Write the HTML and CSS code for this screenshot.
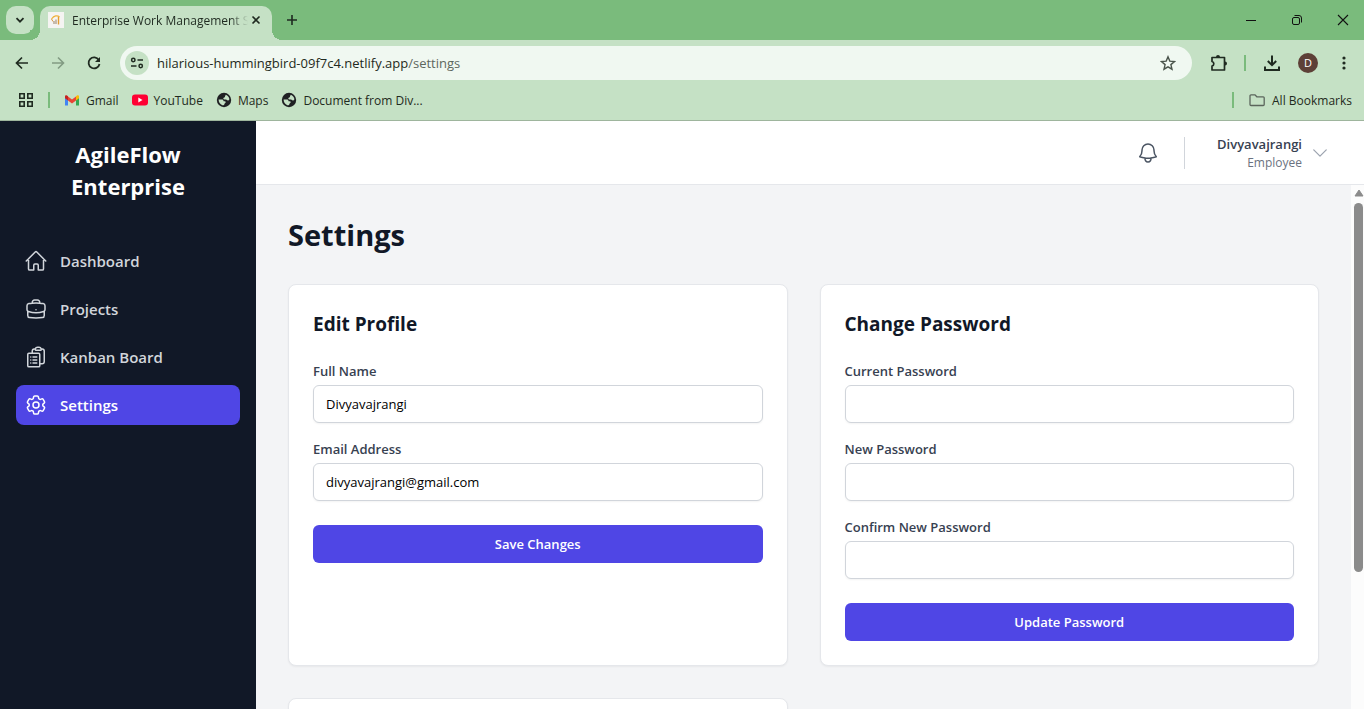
FILE: index.html
```html
<!DOCTYPE html>
<html lang="en">
<head>
<meta charset="utf-8">
<title>Enterprise Work Management System</title>
<link rel="stylesheet" href="styles.css">
</head>
<body>
<div class="window">
  <div class="tabstrip">
    <button class="tab-search" aria-label="Search tabs"><svg width="12" height="12" viewBox="0 0 12 12"><path d="M2.500 4.200 6 7.700l3.500-3.500" fill="none" stroke="#1f2a20" stroke-width="1.800"/></svg></button>
    <div class="tab">
      <svg class="favicon" width="16" height="16" viewBox="0 0 16 16"><path d="M0 0h16v16H0z" fill="#f5f4f2"/><path d="M3.500 7C6 3.500 9.500 3 11.500 5" fill="none" stroke="#eeb13c" stroke-width="1.200"/><path d="M6 9v3M8 7.500V12" stroke="#a08b75" stroke-width="1.100"/><path d="M10.500 5v7.500" stroke="#e59b2d" stroke-width="1.400"/><path d="M3.500 7 5 9.500" stroke="#d9953c"/></svg>
      <span class="tab-title">Enterprise Work Management S</span>
      <button class="plain" aria-label="Close tab"><svg width="16" height="16" viewBox="0 0 16 16"><path d="m4.500 4.500 7 7m0-7-7 7" stroke="#1f2a20" stroke-width="1.600"/></svg></button>
    </div>
    <button class="plain new-tab" aria-label="New tab"><svg width="16" height="16" viewBox="0 0 16 16"><path d="M8 3v10M3 8h10" stroke="#1f2a20" stroke-width="1.600"/></svg></button>
    <div class="window-controls">
      <button class="plain" aria-label="Minimize"><svg width="12" height="12" viewBox="0 0 12 12"><path d="M1 6.500h10" stroke="#111"/></svg></button>
      <button class="plain" aria-label="Restore"><svg width="12" height="12" viewBox="0 0 12 12" fill="none" stroke="#111"><rect x="1.500" y="3.500" width="7" height="7" rx="1.500"/><path d="M3.500 1.500H8A2.500 2.500 0 0 1 10.500 4v4.500"/></svg></button>
      <button class="plain" aria-label="Close"><svg width="12" height="12" viewBox="0 0 12 12"><path d="m1 1 10 10M11 1 1 11" stroke="#111" stroke-width="1.100"/></svg></button>
    </div>
  </div>

  <div class="browser-bar">
    <div class="toolbar">
      <button class="plain" aria-label="Back"><svg width="16" height="16" viewBox="0 0 16 16"><path d="M14 8H3M8 2.500 2.500 8 8 13.500" fill="none" stroke="#1f2a20" stroke-width="1.700"/></svg></button>
      <button class="plain" aria-label="Forward"><svg width="16" height="16" viewBox="0 0 16 16"><path d="M2 8h11M8 2.500 13.500 8 8 13.500" fill="none" stroke="#829b83" stroke-width="1.600"/></svg></button>
      <button class="plain" aria-label="Reload"><svg width="16" height="16" viewBox="0 0 16 16"><path d="M12.800 5A5.500 5.500 0 1 0 13.500 9" fill="none" stroke="#1f2a20" stroke-width="1.800"/><path d="M14 2v5H9z" fill="#1f2a20"/></svg></button>
      <div class="address">
        <button class="site-info" aria-label="Site information"><svg width="14" height="14" viewBox="0 0 14 14" fill="none" stroke="#1f2a20" stroke-width="1.500"><circle cx="3.300" cy="4" r="1.700"/><path d="M7.500 4H13M1 10h5.500"/><circle cx="10.700" cy="10" r="1.700"/></svg></button>
        <span class="url">hilarious-hummingbird-09f7c4.netlify.app<span class="path">/settings</span></span>
        <button class="plain" aria-label="Bookmark"><svg width="16" height="16" viewBox="0 0 16 16"><path d="m8 1.800 1.800 4.300 4.700.400-3.600 3.100 1.100 4.600L8 11.800l-4 2.400 1.100-4.600L1.500 6.500l4.700-.400z" fill="none" stroke="#4a544b" stroke-width="1.400"/></svg></button>
      </div>
      <button class="plain extensions" aria-label="Extensions"><svg width="18" height="18" viewBox="0 0 18 18"><path d="M2 3.500h12.500V8.200v3.300V16H2v-4a2.300 2.300 0 0 0 0-4.500z" fill="none" stroke="#1f2a20" stroke-width="1.700" stroke-linejoin="round"/><path d="M6 3a2 2 0 0 1 4 0zM15 7.500a2 2 0 0 1 0 4z" fill="#1f2a20"/></svg></button>
      <span class="rule"></span>
      <button class="plain download" aria-label="Downloads"><svg width="18" height="18" viewBox="0 0 18 18" fill="none" stroke="#1f2a20" stroke-width="2"><path d="M9 1.500v9M4.800 7 9 11.200 13.200 7M2 12.500V16h14v-3.500"/></svg></button>
      <button class="avatar" aria-label="Profile">D</button>
      <button class="plain" aria-label="Menu"><svg width="16" height="16" viewBox="0 0 16 16" fill="#1f2a20"><circle cx="8" cy="3" r="1.600"/><circle cx="8" cy="8" r="1.600"/><circle cx="8" cy="13" r="1.600"/></svg></button>
    </div>
    <div class="bookmarks">
      <button class="plain" aria-label="Apps"><svg width="16" height="16" viewBox="0 0 16 16" fill="none" stroke="#1f2a20" stroke-width="1.600"><path d="M1.800 1.800h4.400v4.400H1.800zM9.800 1.800h4.400v4.400H9.800zM1.800 9.800h4.400v4.400H1.800zM9.800 9.800h4.400v4.400H9.800z"/></svg></button>
      <span class="rule"></span>
      <a href="#gmail"><svg width="16" height="16" viewBox="0 0 16 16"><path d="M1 4v9.500h3V6z" fill="#4285f4"/><path d="M15 4v9.500h-3V6z" fill="#34a853"/><path d="M4 4.500v4l4 3 4-3v-4l-4 3z" fill="#ea4335"/><path d="M12 8.500V4.300l1-.800c1-.600 2 0 2 1v1.700z" fill="#fbbc04"/><path d="M4 8.500V4.300l-1-.800c-1-.600-2 0-2 1v1.700z" fill="#c5221f"/></svg>Gmail</a>
      <a href="#youtube"><svg width="16" height="16" viewBox="0 0 16 16"><rect y="2.500" width="16" height="11" rx="3" fill="#ff0033"/><path d="m6.300 5.600 4.200 2.400-4.200 2.400z" fill="#fff"/></svg>YouTube</a>
      <a href="#maps"><svg width="16" height="16" viewBox="0 0 16 16"><circle cx="8" cy="8" r="7.200" fill="#1f2023"/><path d="M9.800 2.800c1.900.700 3.400 2.400 3.600 4.500-.500 1.300-1.800 1.500-2.600.800-.5-.6-1.300-.6-2.300-.5C7.200 7.500 7 6.500 7.700 5.800c.9-.2 1.400-.7 1.300-1.500zM2.600 7.600h3.300c1 0 1.600.6 1.700 1.600h1.300c.8.100 1 .9.600 1.500-.6.300-1 .6-1 1.300-.3 1-1 1.400-2.100 1.200-2.300-.7-3.900-3-3.800-5.600z" fill="#c5e1c5"/></svg>Maps</a>
      <a href="#document"><svg width="16" height="16" viewBox="0 0 16 16"><circle cx="8" cy="8" r="7.200" fill="#1f2023"/><path d="M9.800 2.800c1.900.700 3.400 2.400 3.600 4.500-.500 1.300-1.800 1.500-2.600.800-.5-.6-1.300-.6-2.300-.5C7.200 7.500 7 6.500 7.700 5.800c.9-.2 1.400-.7 1.300-1.500zM2.600 7.600h3.300c1 0 1.600.6 1.700 1.600h1.300c.8.100 1 .9.600 1.500-.6.300-1 .6-1 1.300-.3 1-1 1.400-2.100 1.200-2.300-.7-3.900-3-3.800-5.600z" fill="#c5e1c5"/></svg>Document from Div...</a>
      <span class="rule all-rule"></span>
      <button class="plain all"><svg width="18" height="16" viewBox="0 0 18 16"><path d="M3 2.800h4l1.800 2h6.400a1 1 0 0 1 1 1V12.500a1 1 0 0 1-1 1H3a1 1 0 0 1-1-1v-8.700a1 1 0 0 1 1-1z" fill="none" stroke="#5b655c" stroke-width="1.300"/></svg>All Bookmarks</button>
    </div>
  </div>

  <div class="app">
    <aside class="sidebar">
      <div class="brand">AgileFlow Enterprise</div>
      <nav class="nav">
        <a href="#dashboard"><svg class="icon" viewBox="0 0 24 24"><path d="m2.250 12 8.954-8.955c.44-.439 1.152-.439 1.591 0L21.750 12M4.500 9.750v10.125c0 .621.504 1.125 1.125 1.125H9.750v-4.875c0-.621.504-1.125 1.125-1.125h2.250c.621 0 1.125.504 1.125 1.125V21h4.125c.621 0 1.125-.504 1.125-1.125V9.750"/></svg>Dashboard</a>
        <a href="#projects"><svg class="icon" viewBox="0 0 24 24"><path d="M20.250 14.150v4.250c0 1.094-.787 2.036-1.872 2.180-2.087.277-4.216.42-6.378.42s-4.291-.143-6.378-.42c-1.085-.144-1.872-1.086-1.872-2.180v-4.250m16.500 0a2.180 2.180 0 0 0 .750-1.661V8.706c0-1.081-.768-2.015-1.837-2.175a48.114 48.114 0 0 0-3.413-.387m4.500 8.006c-.194.165-.42.295-.673.380A23.978 23.978 0 0 1 12 15.750c-2.648 0-5.195-.429-7.577-1.220a2.016 2.016 0 0 1-.673-.380m0 0A2.180 2.180 0 0 1 3 12.489V8.706c0-1.081.768-2.015 1.837-2.175a48.111 48.111 0 0 1 3.413-.387m7.500 0V5.250A2.250 2.250 0 0 0 13.500 3h-3a2.250 2.250 0 0 0-2.250 2.250v.894m7.500 0a48.667 48.667 0 0 0-7.500 0M12 12.750h.008v.008H12v-.008Z"/></svg>Projects</a>
        <a href="#kanban"><svg class="icon" viewBox="0 0 24 24"><path d="M9 12h3.750M9 15h3.750M9 18h3.750m3 .750H18a2.250 2.250 0 0 0 2.250-2.250V6.108c0-1.135-.845-2.098-1.976-2.192a48.424 48.424 0 0 0-1.123-.080m-5.801 0c-.065.210-.100.433-.100.664 0 .414.336.750.750.750h4.500a.750.750 0 0 0 .750-.750 2.250 2.250 0 0 0-.100-.664m-5.800 0A2.251 2.251 0 0 1 13.500 2.250H15c1.012 0 1.867.668 2.150 1.586m-5.800 0c-.376.023-.750.050-1.124.080C9.095 4.010 8.250 4.973 8.250 6.108V8.250m0 0H4.875c-.621 0-1.125.504-1.125 1.125v11.250c0 .621.504 1.125 1.125 1.125h9.750c.621 0 1.125-.504 1.125-1.125V9.375c0-.621-.504-1.125-1.125-1.125H8.250ZM6.750 12h.008v.008H6.750V12Zm0 3h.008v.008H6.750V15Zm0 3h.008v.008H6.750V18Z"/></svg>Kanban Board</a>
        <a href="#settings" class="active" aria-current="page"><svg class="icon" viewBox="0 0 24 24"><path d="M9.594 3.940c.090-.542.560-.940 1.110-.940h2.593c.550 0 1.020.398 1.110.940l.213 1.281c.063.374.313.686.645.870.074.040.147.083.220.127.325.196.720.257 1.075.124l1.217-.456a1.125 1.125 0 0 1 1.370.490l1.296 2.247a1.125 1.125 0 0 1-.260 1.431l-1.003.827c-.293.241-.438.613-.430.992a7.723 7.723 0 0 1 0 .255c-.008.378.137.750.430.991l1.004.827c.424.350.534.955.260 1.430l-1.298 2.247a1.125 1.125 0 0 1-1.369.491l-1.217-.456c-.355-.133-.750-.072-1.076.124a6.470 6.470 0 0 1-.220.128c-.331.183-.581.495-.644.869l-.213 1.281c-.090.543-.560.940-1.110.940h-2.594c-.550 0-1.019-.398-1.110-.940l-.213-1.281c-.062-.374-.312-.686-.644-.870a6.520 6.520 0 0 1-.220-.127c-.325-.196-.720-.257-1.076-.124l-1.217.456a1.125 1.125 0 0 1-1.369-.490l-1.297-2.247a1.125 1.125 0 0 1 .260-1.431l1.004-.827c.292-.240.437-.613.430-.991a6.932 6.932 0 0 1 0-.255c.007-.380-.138-.751-.430-.992l-1.004-.827a1.125 1.125 0 0 1-.260-1.430l1.297-2.247a1.125 1.125 0 0 1 1.370-.491l1.216.456c.356.133.751.072 1.076-.124.072-.044.146-.086.220-.128.332-.183.582-.495.644-.869l.214-1.280Z"/><path d="M15 12a3 3 0 1 1-6 0 3 3 0 0 1 6 0Z"/></svg>Settings</a>
      </nav>
    </aside>

    <div class="content">
      <header class="topbar">
        <button class="plain bell" aria-label="Notifications"><svg class="icon" viewBox="0 0 24 24"><path d="M14.857 17.082a23.848 23.848 0 0 0 5.454-1.310A8.967 8.967 0 0 1 18 9.750V9A6 6 0 0 0 6 9v.750a8.967 8.967 0 0 1-2.312 6.022c1.733.640 3.560 1.085 5.455 1.310m5.714 0a24.255 24.255 0 0 1-5.714 0m5.714 0a3 3 0 1 1-5.714 0"/></svg></button>
        <span class="divider"></span>
        <button class="plain user"><span class="who"><span class="name">Divyavajrangi</span><span class="role">Employee</span></span><svg class="icon chevron" viewBox="0 0 24 24"><path d="m19.500 8.250-7.500 7.500-7.500-7.500"/></svg></button>
      </header>
      <div class="scroll-area">
        <main class="page">
          <h1>Settings</h1>
          <div class="cards">
            <form class="card">
              <h2>Edit Profile</h2>
              <div class="field"><label for="full-name">Full Name</label><input id="full-name" type="text" value="Divyavajrangi"></div>
              <div class="field"><label for="email">Email Address</label><input id="email" type="email" value="divyavajrangi@gmail.com"></div>
              <button class="primary" type="button">Save Changes</button>
            </form>
            <form class="card">
              <h2>Change Password</h2>
              <div class="field"><label for="current">Current Password</label><input id="current" type="password"></div>
              <div class="field"><label for="new">New Password</label><input id="new" type="password"></div>
              <div class="field"><label for="confirm">Confirm New Password</label><input id="confirm" type="password"></div>
              <button class="primary" type="button">Update Password</button>
            </form>
            <section class="card next"></section>
          </div>
        </main>
        <div class="scrollbar" aria-hidden="true"><svg width="10" height="8" viewBox="0 0 10 8"><path d="M5 1 9 7H1z" fill="#8b8b8b" stroke="#8b8b8b" stroke-linejoin="round"/></svg><span class="thumb"></span></div>
      </div>
    </div>
  </div>
</div>
</body>
</html>
```

FILE: styles.css
```css
* { box-sizing: border-box; }
body {
  margin: 0;
  font-family: "Open Sans", "Noto Sans", sans-serif;
  color: #111827;
}
button, input { font: inherit; color: inherit; }
svg { display: block; flex: none; }
a { color: inherit; text-decoration: none; }
.window { height: 100vh; display: flex; flex-direction: column; overflow: hidden; }

.plain {
  display: flex; align-items: center; justify-content: center;
  flex: none; padding: 0; border: 0; background: none;
}

/* Browser frame */
.tabstrip {
  flex: none; height: 40px; display: flex; align-items: center;
  padding-left: 6px; background: #7abb7c; font-size: 12px;
}
.tab-search {
  width: 28px; height: 28px; padding: 0; border: 0; border-radius: 10px;
  display: flex; align-items: center; justify-content: center; background: #c5e1c5;
}
.tab {
  position: relative; align-self: flex-end; width: 232px; height: 34px; margin-left: 6px;
  padding: 0 8px 6px; display: flex; align-items: center;
  background: #c5e1c5; border-radius: 10px 10px 0 0;
}
.tab::before, .tab::after {
  content: ""; position: absolute; bottom: 0; width: 10px; height: 10px;
}
.tab::before { right: 100%; background: radial-gradient(circle at 0 0, #7abb7c 10px, #c5e1c5 10px); }
.tab::after { left: 100%; background: radial-gradient(circle at 100% 0, #7abb7c 10px, #c5e1c5 10px); }
.tab-title {
  flex: 1; min-width: 0; margin-left: 8px; white-space: nowrap; color: #1f2a20;
  mask-image: linear-gradient(90deg, #000 90%, transparent);
}
.new-tab { margin-left: 12px; }
.window-controls { margin: 0 -2px 0 auto; display: flex; align-self: stretch; }
.window-controls .plain { width: 46px; }
.browser-bar {
  flex: none; height: 81px; background: #c5e1c5; border-bottom: 1px solid #9eb59d;
  color: #1f2a20;
}
.toolbar { display: flex; align-items: center; height: 46px; padding: 0 12px 0 14px; }
.toolbar > .plain + .plain { margin-left: 20px; }
.address {
  flex: 1; height: 34px; margin: 0 18px; padding: 0 16px 0 5px; border-radius: 17px;
  display: flex; align-items: center; background: #f0f8f1;
}
.site-info {
  width: 24px; height: 24px; padding: 0; border: 0; border-radius: 50%;
  display: flex; align-items: center; justify-content: center; background: #c5e1c5;
}
.url { flex: 1; margin-left: 8px; font-size: 13px; }
.path { color: #5d675e; }
.rule { width: 2px; height: 16px; background: #7abb7c; }
.toolbar .rule { margin: 0 17px 0 16px; }
.avatar {
  width: 20px; height: 20px; margin: 0 18px 0 17px; padding: 0; border: 0; border-radius: 50%;
  background: #5d4037; color: #fff; font-size: 11px; line-height: 20px;
}
.bookmarks {
  display: flex; align-items: center; height: 28px; padding: 0 12px 0 18px; font-size: 12px;
}
.bookmarks .rule { margin: 0 14px; }
.bookmarks a { display: flex; align-items: center; gap: 6px; margin-right: 13px; }
.bookmarks .all-rule { margin-left: auto; }
.all { gap: 6px; }

/* Application shell */
.app { flex: 1; min-height: 0; display: flex; }
.icon {
  width: 24px; height: 24px; fill: none; stroke: currentColor;
  stroke-width: 1.5; stroke-linecap: round; stroke-linejoin: round;
}
.sidebar { flex: none; width: 256px; padding: 17px 16px; background: #111827; color: #fff; }
.brand {
  padding: 0 48px; text-align: center; font-size: 22px; line-height: 32px; font-weight: 700;
}
.nav { margin-top: 39px; display: flex; flex-direction: column; gap: 8px; }
.nav a {
  display: flex; align-items: center; gap: 12px; height: 40px; padding: 0 8px;
  border-radius: 8px; color: #d1d5db; font-size: 15px; font-weight: 600;
}
.nav .active { background: #4f46e5; color: #fff; }
.content { flex: 1; min-width: 0; display: flex; flex-direction: column; }
.topbar {
  flex: none; height: 64px; padding: 0 34px; display: flex; align-items: center;
  justify-content: flex-end; background: #fff; border-bottom: 1px solid #e5e7eb;
}
.bell { color: #4b5563; }
.divider { width: 1px; height: 32px; margin: 0 32px 0 24px; background: #d1d5db; }
.user { gap: 8px; text-align: right; }
.who { display: flex; flex-direction: column; }
.name { font-size: 13px; line-height: 20px; font-weight: 600; color: #374151; }
.role { font-size: 12px; line-height: 18px; font-weight: 500; color: #6b7280; }
.chevron { width: 20px; height: 20px; color: #9ca3af; }

.scroll-area { flex: 1; min-height: 0; display: flex; background: #f3f4f6; }
.page { flex: 1; min-width: 0; padding: 32px; overflow: hidden; }
h1 { margin: 0 0 31px; font-size: 29px; line-height: 36px; font-weight: 700; }
.cards { display: grid; grid-template-columns: 1fr 1fr; gap: 32px; }
.card {
  padding: 24px; background: #fff; border: 1px solid #e5e7eb; border-radius: 8px;
  box-shadow: 0 1px 2px rgba(0, 0, 0, 0.05);
}
.next { min-height: 200px; }
h2 { margin: 0 0 22px; font-size: 19px; line-height: 30px; font-weight: 700; }
.field { margin-bottom: 16px; }
.field label {
  display: block; margin-bottom: 4px; font-size: 13px; line-height: 20px;
  font-weight: 600; color: #374151;
}
.field input {
  display: block; width: 100%; height: 38px; padding: 8px 12px; border: 1px solid #d1d5db;
  border-radius: 6px; background: #fff; color: #000; font-size: 13px; outline: 0;
  box-shadow: 0 1px 2px rgba(0, 0, 0, 0.05);
}
.primary {
  display: block; width: 100%; height: 38px; margin-top: 24px; padding: 0 16px; border: 0;
  border-radius: 6px; background: #4f46e5; color: #fff; font-size: 13px; font-weight: 600;
}
.scrollbar {
  flex: none; width: 13px; padding: 4px 1px 0 3px; background: #fcfcfc;
  display: flex; flex-direction: column; align-items: center; gap: 6px;
}
.thumb { width: 9px; height: 71%; border-radius: 5px; background: #8b8b8b; }
```
